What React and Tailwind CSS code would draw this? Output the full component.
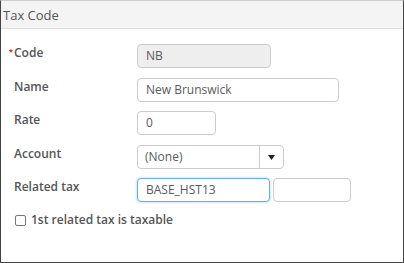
export default function App() {
  const font = { fontFamily: '"Open Sans", "Noto Sans", sans-serif' };
  const inputBase =
    "h-[24px] rounded-[4px] border px-[8px] text-[12px] leading-[22px] text-[#5a5a5a] outline-none";
  return (
    <div style={font} className="w-[404px] h-[263px] bg-white border border-[#444] border-t-[#ccc] flex flex-col overflow-hidden">
      <div className="h-[28px] bg-[#f4f4f4] border-b border-[#ddd] px-[2px] flex items-center shrink-0">
        <span className="text-[13px] text-[#555] leading-[18px]">Tax Code</span>
      </div>
      <div className="flex flex-col pl-[13px] pt-[15px]">
        <div className="flex items-start h-[24px]">
          <div className="w-[123px] relative text-[12px] font-semibold text-[#555] leading-[16px] pt-[1px]">
            <span className="absolute left-[-5px] top-[4px] text-[#e00] text-[7px] leading-[8px] font-bold">*</span>
            Code
          </div>
          <div className={inputBase + " w-[134px] bg-[#eee] border-[#ccc]"}>NB</div>
        </div>
        <div className="flex items-start h-[24px] mt-[10px]">
          <div className="w-[123px] text-[12px] font-semibold text-[#555] leading-[16px] pt-[1px]">Name</div>
          <div className={inputBase + " w-[202px] bg-white border-[#ccc]"}>New Brunswick</div>
        </div>
        <div className="flex items-start h-[24px] mt-[9px]">
          <div className="w-[123px] text-[12px] font-semibold text-[#555] leading-[16px] pt-[1px]">Rate</div>
          <div className={inputBase + " w-[79px] bg-white border-[#ccc]"}>0</div>
        </div>
        <div className="flex items-start h-[24px] mt-[10px]">
          <div className="w-[123px] text-[12px] font-semibold text-[#555] leading-[16px] pt-[1px]">Account</div>
          <div className="h-[24px] w-[147px] rounded-[4px] border border-[#ccc] bg-white flex text-[12px] text-[#5a5a5a]">
            <div className="flex-1 px-[7px] leading-[22px]">(None)</div>
            <div className="w-[24px] border-l border-[#ccc] flex items-center justify-center">
              <svg width="7" height="5" viewBox="0 0 7 5"><path d="M0 0 H7 L3.5 5 Z" fill="#222" /></svg>
            </div>
          </div>
        </div>
        <div className="flex items-start h-[24px] mt-[9px]">
          <div className="w-[123px] text-[12px] font-semibold text-[#555] leading-[16px] pt-[1px]">Related tax</div>
          <div className={inputBase + " w-[133px] bg-white border-[#66afe9] shadow-[0_0_3px_rgba(102,175,233,0.6)]"}>BASE_HST13</div>
          <div className={inputBase + " w-[78px] ml-[3px] bg-white border-[#ccc]"}></div>
        </div>
        <div className="flex items-center mt-[10px] pl-[1px]">
          <div className="w-[11px] h-[11px] rounded-[2px] border border-[#777] bg-white"></div>
          <span className="ml-[5px] text-[12px] font-semibold text-[#555] leading-[16px]">1st related tax is taxable</span>
        </div>
      </div>
    </div>
  );
}
